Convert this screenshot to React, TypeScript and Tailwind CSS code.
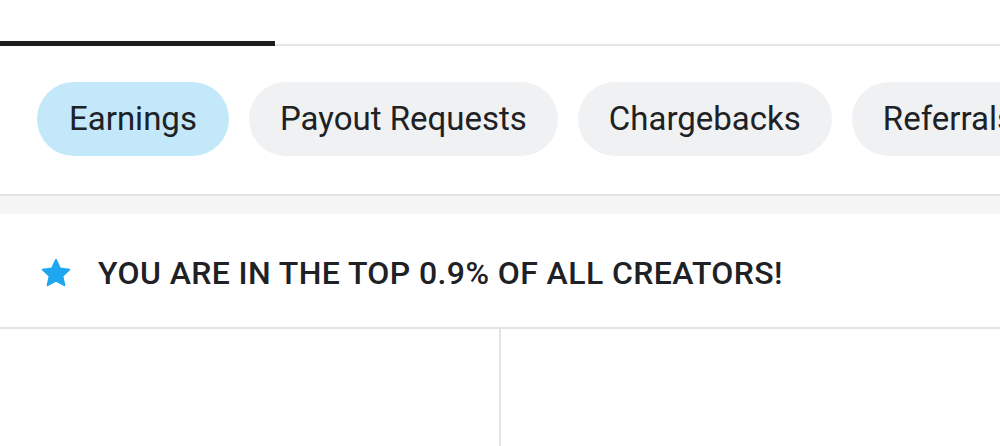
import { useState } from "react";

const tabs = ["Earnings", "Payout Requests", "Chargebacks", "Referrals"];

const StarIcon = () => (
  <svg width="32" height="30" viewBox="0 0 24 23" className="shrink-0">
    <path
      d="M12 1.5l3.1 6.6 7.1.8-5.3 4.9 1.5 7.1L12 17.3l-6.4 3.6 1.5-7.1-5.3-4.9 7.1-.8z"
      fill="#1ea7ee"
      stroke="#1ea7ee"
      strokeWidth="1.5"
      strokeLinejoin="round"
    />
  </svg>
);

export default function App() {
  const [active, setActive] = useState("Earnings");

  return (
    <div
      className="w-[1000px] h-[446px] overflow-hidden bg-white text-[#202124]"
      style={{ fontFamily: "Roboto, 'Noto Sans', sans-serif" }}
    >
      {/* 상단 탭 라인 */}
      <div className="h-[46px] flex items-end border-b-2 border-[#e6e6e8]">
        <div className="w-[275px] h-[5px] bg-[#1d1d20] -mb-[2px]" />
      </div>

      {/* 필터 칩 */}
      <div className="flex gap-5 pl-[37px] pt-[36px] pb-[38px] whitespace-nowrap border-b-2 border-[#e4e4e4]">
        {tabs.map((t) => (
          <button
            key={t}
            onClick={() => setActive(t)}
            className={`h-[74px] rounded-full text-[33px] leading-none shrink-0 pb-[2px] ${
              active === t ? "bg-[#c2e8fa] px-[32px]" : "bg-[#f0f1f3] px-[31px]"
            }`}
          >
            {t}
          </button>
        ))}
      </div>
      <div className="h-[18px] bg-[#f5f5f5]" />

      {/* 배너 */}
      <div className="h-[115px] flex items-center gap-[26px] pl-[40px] pt-[5px] border-b-2 border-[#e4e4e4]">
        <StarIcon />
        <span className="text-[32px] font-medium tracking-[0.4px]">
          YOU ARE IN THE TOP 0.9% OF ALL CREATORS!
        </span>
      </div>

      {/* 하단 두 칸 */}
      <div className="grid grid-cols-2 h-[120px]">
        <div className="border-r-2 border-[#e4e4e4] -mr-px" />
        <div />
      </div>
    </div>
  );
}
